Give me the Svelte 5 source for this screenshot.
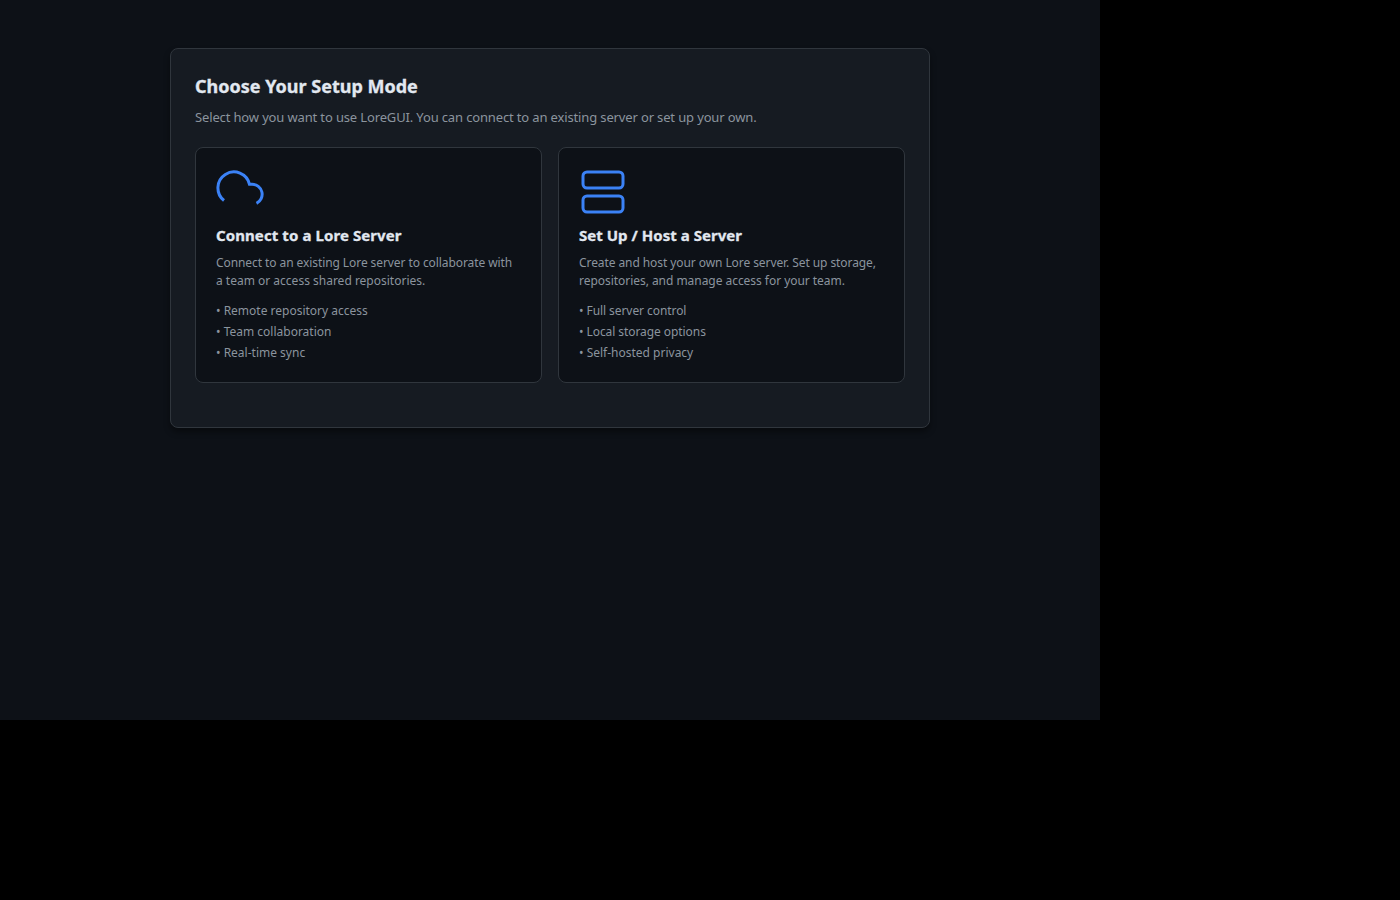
<script>
  const modes = [
    {
      icon: 'cloud',
      title: 'Connect to a Lore Server',
      text: 'Connect to an existing Lore server to collaborate with a team or access shared repositories.',
      features: ['Remote repository access', 'Team collaboration', 'Real-time sync']
    },
    {
      icon: 'server',
      title: 'Set Up / Host a Server',
      text: 'Create and host your own Lore server. Set up storage, repositories, and manage access for your team.',
      features: ['Full server control', 'Local storage options', 'Self-hosted privacy']
    }
  ];
</script>

<div class="window">
  <main class="panel">
    <h2>Choose Your Setup Mode</h2>
    <p class="intro">Select how you want to use LoreGUI. You can connect to an existing server or set up your own.</p>
    <div class="modes">
      {#each modes as mode}
        <button class="mode {mode.icon}">
          <svg width="48" height="48" viewBox="0 0 48 48" fill="none" stroke="currentColor" stroke-width="3">
            {#if mode.icon === 'cloud'}
              <path d="M8 32.5A16 16 0 1 1 33.5 16.3H36A10 10 0 0 1 40.5 35.3" />
            {:else}
              <rect x="4" y="4" width="40" height="16" rx="4" />
              <rect x="4" y="28" width="40" height="16" rx="4" />
            {/if}
          </svg>
          <h3>{mode.title}</h3>
          <p>{mode.text}</p>
          <ul>
            {#each mode.features as feature}
              <li>• {feature}</li>
            {/each}
          </ul>
        </button>
      {/each}
    </div>
  </main>
</div>

<style>
  :global(body) { margin: 0; background: #000; }
  .window {
    box-sizing: border-box;
    width: 1100px;
    height: 720px;
    padding: 48px 24px;
    background: #0d1117;
    color: #e2e8f0;
    font-family: "Noto Sans", sans-serif;
    font-size: 13px;
  }
  .panel {
    box-sizing: border-box;
    width: 760px;
    height: 380px;
    margin: 0 auto;
    padding: 24px;
    background: #161b22;
    border: 1px solid #30363d;
    border-radius: 8px;
    box-shadow: 0 4px 6px rgba(0, 0, 0, 0.4);
  }
  h2, h3 { font-weight: 700; -webkit-text-stroke: 0.3px currentColor; }
  h2 { margin: 0 0 8px; font-size: 18px; line-height: 27px; }
  .intro { margin: 0 0 20px; line-height: 19px; letter-spacing: -0.143px; color: #8b949e; }
  .modes { display: grid; grid-template-columns: 1fr 1fr; gap: 16px; }
  .mode {
    box-sizing: border-box;
    height: 236px;
    padding: 20px;
    display: flex;
    flex-direction: column;
    align-items: flex-start;
    text-align: left;
    font: inherit;
    color: inherit;
    background: #0d1117;
    border: 1px solid #30363d;
    border-radius: 8px;
  }
  svg { flex: none; color: #3b82f6; }
  h3 { margin: 8px 0 8px; font-size: 15px; line-height: 22px; }
  .cloud h3 { letter-spacing: 0.09px; }
  .server h3 { letter-spacing: 0.03px; }
  .mode p { margin: 0 0 10px; font-size: 12px; line-height: 18px; color: #8b949e; }
  .server p { letter-spacing: -0.04px; }
  .mode p::first-line { letter-spacing: -0.08px; }
  ul { margin: 0; padding: 0; list-style: none; font-size: 12px; line-height: 21px; color: #8b949e; }
  .server li:nth-child(-n + 2) { letter-spacing: -0.07px; }
</style>
